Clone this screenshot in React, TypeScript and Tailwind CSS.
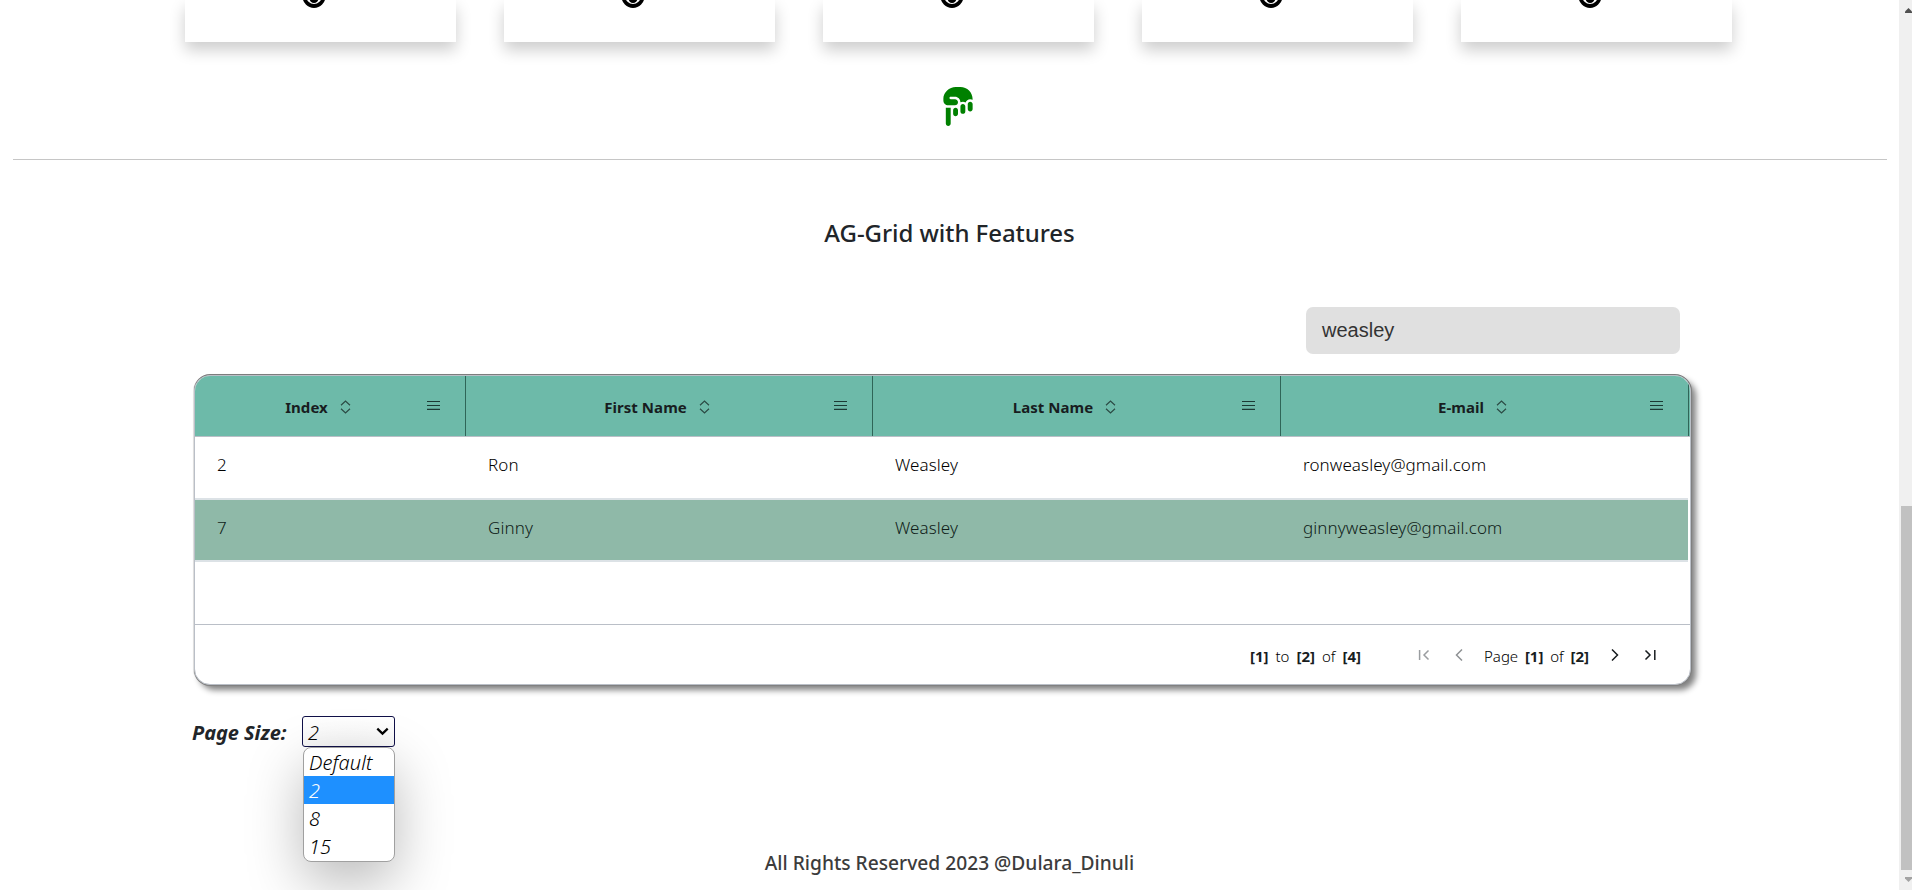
import React from "react";
import { FaHandPointDown } from "react-icons/fa6";

const columns = [
  { name: "Index", width: "w-[271px]" },
  { name: "First Name", width: "w-[407px]" },
  { name: "Last Name", width: "w-[408px]" },
  { name: "E-mail", width: "w-[408px]" },
];

const rows = [
  { cells: ["2", "Ron", "Weasley", "ronweasley@gmail.com"], style: "h-[63px] bg-white pb-[6px] text-black" },
  { cells: ["7", "Ginny", "Weasley", "ginnyweasley@gmail.com"], style: "h-[62px] bg-[#8fb9a8] pb-[4px] text-[#0f1d19]" },
];

const pageSizes = ["Default", "2", "8", "15"];

function Card() {
  return (
    <div className="flex h-[42px] w-[271px] justify-center bg-white pr-[13px] shadow-[0_8px_16px_rgba(0,0,0,0.2)]">
      <svg className="h-[9px] w-[26px]" viewBox="0 0 26 9">
        <circle cx="13" cy="-3.6" r="9.6" fill="none" stroke="#000" strokeWidth="3.8" />
        <circle cx="13" cy="-1.4" r="4.4" fill="#000" />
      </svg>
    </div>
  );
}

function SortIcon() {
  return (
    <svg className="ml-[12px] h-[14px] w-[11px]" viewBox="0 0 11 14" fill="none" stroke="#2b4a44" strokeWidth="1.2">
      <path d="M1 5.2 5.5 1 10 5.2M1 8.8 5.5 13 10 8.8" />
    </svg>
  );
}

function MenuIcon() {
  return (
    <svg className="-ml-[13px] mb-[2px] h-[10px] w-[13px] shrink-0" viewBox="0 0 13 10" stroke="#1c3a34" strokeWidth="1.2">
      <path d="M0 1.5H13M0 5.5H13M0 9.3H13" />
    </svg>
  );
}

function PageArrow({ d, className }: { d: string; className: string }) {
  return (
    <svg className={`h-[12px] w-[12px] shrink-0 ${className}`} viewBox="0 0 12 12" fill="none" stroke="currentColor" strokeWidth="1.5">
      <path d={d} />
    </svg>
  );
}

function Num({ children }: { children: string }) {
  return <span className="font-bold text-[#181d1f]">{children}</span>;
}

function Grid() {
  return (
    <div className="ml-[194px] mt-[21px] flex h-[310px] w-[1497px] flex-col overflow-hidden rounded-[16px] border border-[#babfc7] bg-white shadow-[0_-1px_0_#7d7d7d,1px_0_0_#808080,0_1px_0_#808080,5px_5px_6px_#808080,-1px_0_0_#e2e2e2]">
      <div className="flex h-[61px] shrink-0 border-b border-[#babfc7] bg-[#6dbaa9]">
        {columns.map((c) => (
          <div key={c.name} className={`flex shrink-0 items-center border-r border-[#2f6558] pr-[25px] ${c.width}`}>
            <div className="flex flex-1 items-center justify-center pl-px pt-[2px]">
              <span className="text-[15px] font-bold leading-[20px] tracking-[0.06px] text-[#181d1f]">{c.name}</span>
              <SortIcon />
            </div>
            <MenuIcon />
          </div>
        ))}
      </div>
      {rows.map((r) => (
        <div key={r.cells[0]} className={`flex w-[1493px] shrink-0 items-center border-b-2 border-[#dce2e6] text-[17px] font-light tracking-[0.09px] ${r.style}`}>
          {r.cells.map((t, i) => (
            <div key={i} className={`shrink-0 pl-[22px] leading-[24px] ${columns[i].width}`}>{t}</div>
          ))}
        </div>
      ))}
      <div className="flex-1" />
      <div className="flex h-[60px] shrink-0 items-center border-t border-[#babfc7] pr-[34px] text-[15px] font-light text-black">
        <div className="ml-auto mt-[3px] flex w-[111px] justify-between leading-[20px]">
          <Num>[1]</Num><span>to</span><Num>[2]</Num><span>of</span><Num>[4]</Num>
        </div>
        <PageArrow className="ml-[57px] text-[#9a9da0]" d="M1.6 1V11M10.5 1.5 6 6 10.5 10.5" />
        <PageArrow className="ml-[23px] text-[#8f9294]" d="M9 0.5 3.5 6 9 11.5" />
        <div className="ml-[19px] mt-[3px] flex w-[105px] justify-between leading-[20px]">
          <span>Page</span><Num>[1]</Num><span>of</span><Num>[2]</Num>
        </div>
        <PageArrow className="ml-[20px] text-[#181d1f]" d="M3 0.5 8.5 6 3 11.5" />
        <PageArrow className="ml-[23px] text-[#181d1f]" d="M1.5 1.5 6 6 1.5 10.5M10.8 1V11" />
      </div>
    </div>
  );
}

function PageSize() {
  return (
    <div className="ml-[192px] mt-[31px] flex h-[31px] items-center text-[20px] italic">
      <span className="w-[110px] pt-[3px] font-bold leading-[28px] tracking-[-0.06px] text-[#212529]">Page Size:</span>
      <div className="relative">
        <div className="flex h-[31px] w-[93px] items-center justify-between rounded-[3px] border border-[#101048] bg-linear-to-b from-white to-[#f7f7f7] pl-[5px] pr-[5px] font-light text-black">
          <span className="pt-[3px] leading-[26px]">2</span>
          <svg className="mb-px h-[9px] w-[13px]" viewBox="0 0 13 9" fill="none" stroke="#000" strokeWidth="2.2">
            <path d="M1.3 1.6 6.5 6.6 11.7 1.6" />
          </svg>
        </div>
        <div className="absolute left-[1px] top-[31px] w-[92px] rounded-[8px] border border-[#a0a0a0] bg-white pb-px font-light tracking-[0.1px] text-black shadow-[0_20px_56px_rgba(0,0,0,0.28)]">
          {pageSizes.map((s) => (
            <div key={s} className={`h-[28px] pl-[5px] leading-[30px] ${s === "2" ? "bg-[#1e90ff] text-white" : ""}`}>{s}</div>
          ))}
        </div>
      </div>
    </div>
  );
}

export default function App() {
  return (
    <div className="flex h-[890px] w-[1912px] overflow-hidden bg-white font-['Noto_Sans',sans-serif]">
      <main className="flex w-[1899px] shrink-0 flex-col">
        <div className="flex justify-between pl-[185px] pr-[167px]">
          {[0, 1, 2, 3, 4].map((i) => <Card key={i} />)}
        </div>
        <div className="flex h-[117px] justify-center pl-[17px] pt-[45px]">
          <FaHandPointDown className="h-[39px] w-[38px] text-[#008000]" />
        </div>
        <hr className="ml-[13px] mr-[12px] border-[#c6c6c6]" />
        <h2 className="mt-[57px] text-center text-[24px] font-medium leading-[32px] tracking-[-0.05px] text-[#212529]">AG-Grid with Features</h2>
        <div className="mt-[58px] flex justify-end pr-[219px]">
          <div className="h-[47px] w-[374px] rounded-[7px] bg-[#e0e0e0] pl-[16px] font-['Liberation_Sans',sans-serif] text-[20px] leading-[46px] text-[#333]">weasley</div>
        </div>
        <Grid />
        <PageSize />
        <footer className="mt-[102px] text-center text-[19.2px] font-medium leading-[28px] text-[#3c3c3c]">All Rights Reserved 2023 @Dulara_Dinuli</footer>
      </main>
      <aside className="flex w-[13px] shrink-0 flex-col justify-between bg-[#f0f0f0]">
        <svg className="h-[506px] w-[13px]" viewBox="0 0 13 506"><path d="M6 13V11.5L9.5 8 13 11.5V13Z" fill="#505050" /></svg>
        <div className="ml-[2px] h-[364px] bg-[#c1c1c1]" />
        <svg className="h-[20px] w-[13px]" viewBox="0 0 13 20"><path d="M6 7V8.5L9.5 12 13 8.5V7Z" fill="#a3a3a3" /></svg>
      </aside>
    </div>
  );
}
